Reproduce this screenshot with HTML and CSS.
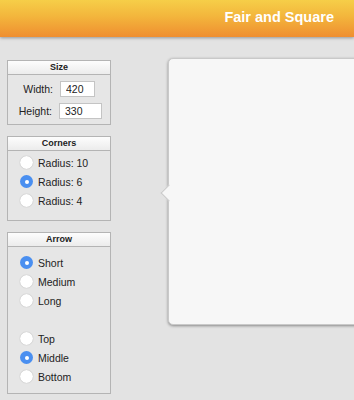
FILE: index.html
```html
<!DOCTYPE html>
<html lang="en">
<head>
  <meta charset="UTF-8" />
  <meta name="viewport" content="width=device-width, initial-scale=1.0"/>
  <title>Fair and Square</title>
  <link rel="stylesheet" href="styles.css">
</head>
<body>

<div class="topbar">
  <h1>Fair and Square</h1>
</div>

<div class="main">
  <div class="sidebar">

    <div class="panel">
      <div class="panel-title">Size</div>
      <div class="panel-body size-body">
        <div class="field">
          <label>Width:</label>
          <input class="in-w" type="text" value="420">
        </div>
        <div class="field">
          <label>Height:</label>
          <input class="in-h" type="text" value="330">
        </div>
      </div>
    </div>

    <div class="panel">
      <div class="panel-title">Corners</div>
      <div class="panel-body corners-body">
        <div class="radio"><span class="dot"></span>Radius: 10</div>
        <div class="radio"><span class="dot on"></span>Radius: 6</div>
        <div class="radio"><span class="dot"></span>Radius: 4</div>
      </div>
    </div>

    <div class="panel">
      <div class="panel-title">Arrow</div>
      <div class="panel-body arrow-body">
        <div class="radio"><span class="dot on"></span>Short</div>
        <div class="radio"><span class="dot"></span>Medium</div>
        <div class="radio"><span class="dot"></span>Long</div>
        <div class="spacer"></div>
        <div class="radio"><span class="dot"></span>Top</div>
        <div class="radio"><span class="dot on"></span>Middle</div>
        <div class="radio"><span class="dot"></span>Bottom</div>
      </div>
    </div>

  </div>

  <div class="stage">
    <div class="bubble"></div>
  </div>
</div>

</body>
</html>
```

FILE: styles.css
```css
html, body {
  margin: 0;
  padding: 0;
  height: 100%;
  overflow: hidden;
}
body {
  background: #e3e3e3;
  font-family: "Liberation Sans", Arial, sans-serif;
  color: #222;
}
.topbar {
  height: 37px;
  background: linear-gradient(#f6ce48, #f3b53c 45%, #ef8e30);
  box-shadow: 0 1px 3px rgba(0,0,0,0.35);
  display: flex;
  justify-content: flex-end;
  align-items: center;
  padding-right: 20px;
  position: relative;
}
.topbar h1 {
  margin: 0 0 3px;
  font-size: 14.5px;
  font-weight: bold;
  color: #fff;
}
.main {
  display: flex;
  align-items: flex-start;
}
.sidebar {
  margin: 23px 0 0 7px;
  width: 104px;
  flex-shrink: 0;
  display: flex;
  flex-direction: column;
  gap: 11px;
}
.panel {
  border: 1px solid #b4b4b4;
  background: #e6e6e6;
}
.panel-title {
  height: 13px;
  line-height: 13px;
  text-align: center;
  font-size: 9px;
  font-weight: bold;
  background: linear-gradient(#fdfdfd, #ececec);
  border-bottom: 1px solid #b4b4b4;
}
.panel-body {
  font-size: 10.5px;
}
.size-body {
  height: 43px;
  padding-top: 6px;
  display: flex;
  flex-direction: column;
  gap: 6px;
}
.field {
  display: flex;
  align-items: center;
  justify-content: flex-end;
}
.field label {
  width: 46px;
  text-align: right;
  margin-right: 7px;
}
.field input {
  box-sizing: border-box;
  height: 16px;
  border: 1px solid #c4c4c4;
  background: #fff;
  font: 10.5px "Liberation Sans", Arial, sans-serif;
  color: #222;
  padding: 0 0 0 5px;
  margin: 0;
}
.in-w {
  width: 35px;
  margin-right: 15px !important;
}
.in-h {
  width: 43px;
  margin-right: 8px !important;
}
.corners-body {
  height: 67px;
  padding-top: 2px;
}
.arrow-body {
  height: 140px;
  padding-top: 6px;
}
.radio {
  height: 19px;
  display: flex;
  align-items: center;
  padding-left: 12px;
}
.spacer {
  height: 19px;
}
.dot {
  box-sizing: border-box;
  width: 13px;
  height: 13px;
  border-radius: 50%;
  background: #fff;
  box-shadow: 0 0 1px rgba(0,0,0,0.35);
  margin-right: 5px;
  position: relative;
}
.dot.on {
  background: #4a8ff0;
  box-shadow: none;
}
.dot.on::after {
  content: "";
  position: absolute;
  left: 4.5px;
  top: 4.5px;
  width: 4px;
  height: 4px;
  border-radius: 50%;
  background: #fff;
}
.stage {
  flex: 1;
  min-width: 0;
  overflow: hidden;
  padding: 21px 0 6px 57px;
}
.bubble {
  width: 420px;
  height: 267px;
  background: #f7f7f7;
  border-radius: 5px;
  border: 1px solid #c9c9c9;
  box-sizing: border-box;
  box-shadow: 0 1px 3px rgba(0,0,0,0.4);
  position: relative;
}
.bubble::before {
  content: "";
  position: absolute;
  left: -6px;
  top: 128px;
  width: 11px;
  height: 11px;
  background: #f7f7f7;
  border-left: 1px solid #c9c9c9;
  border-bottom: 1px solid #c9c9c9;
  transform: rotate(45deg);
}
```
